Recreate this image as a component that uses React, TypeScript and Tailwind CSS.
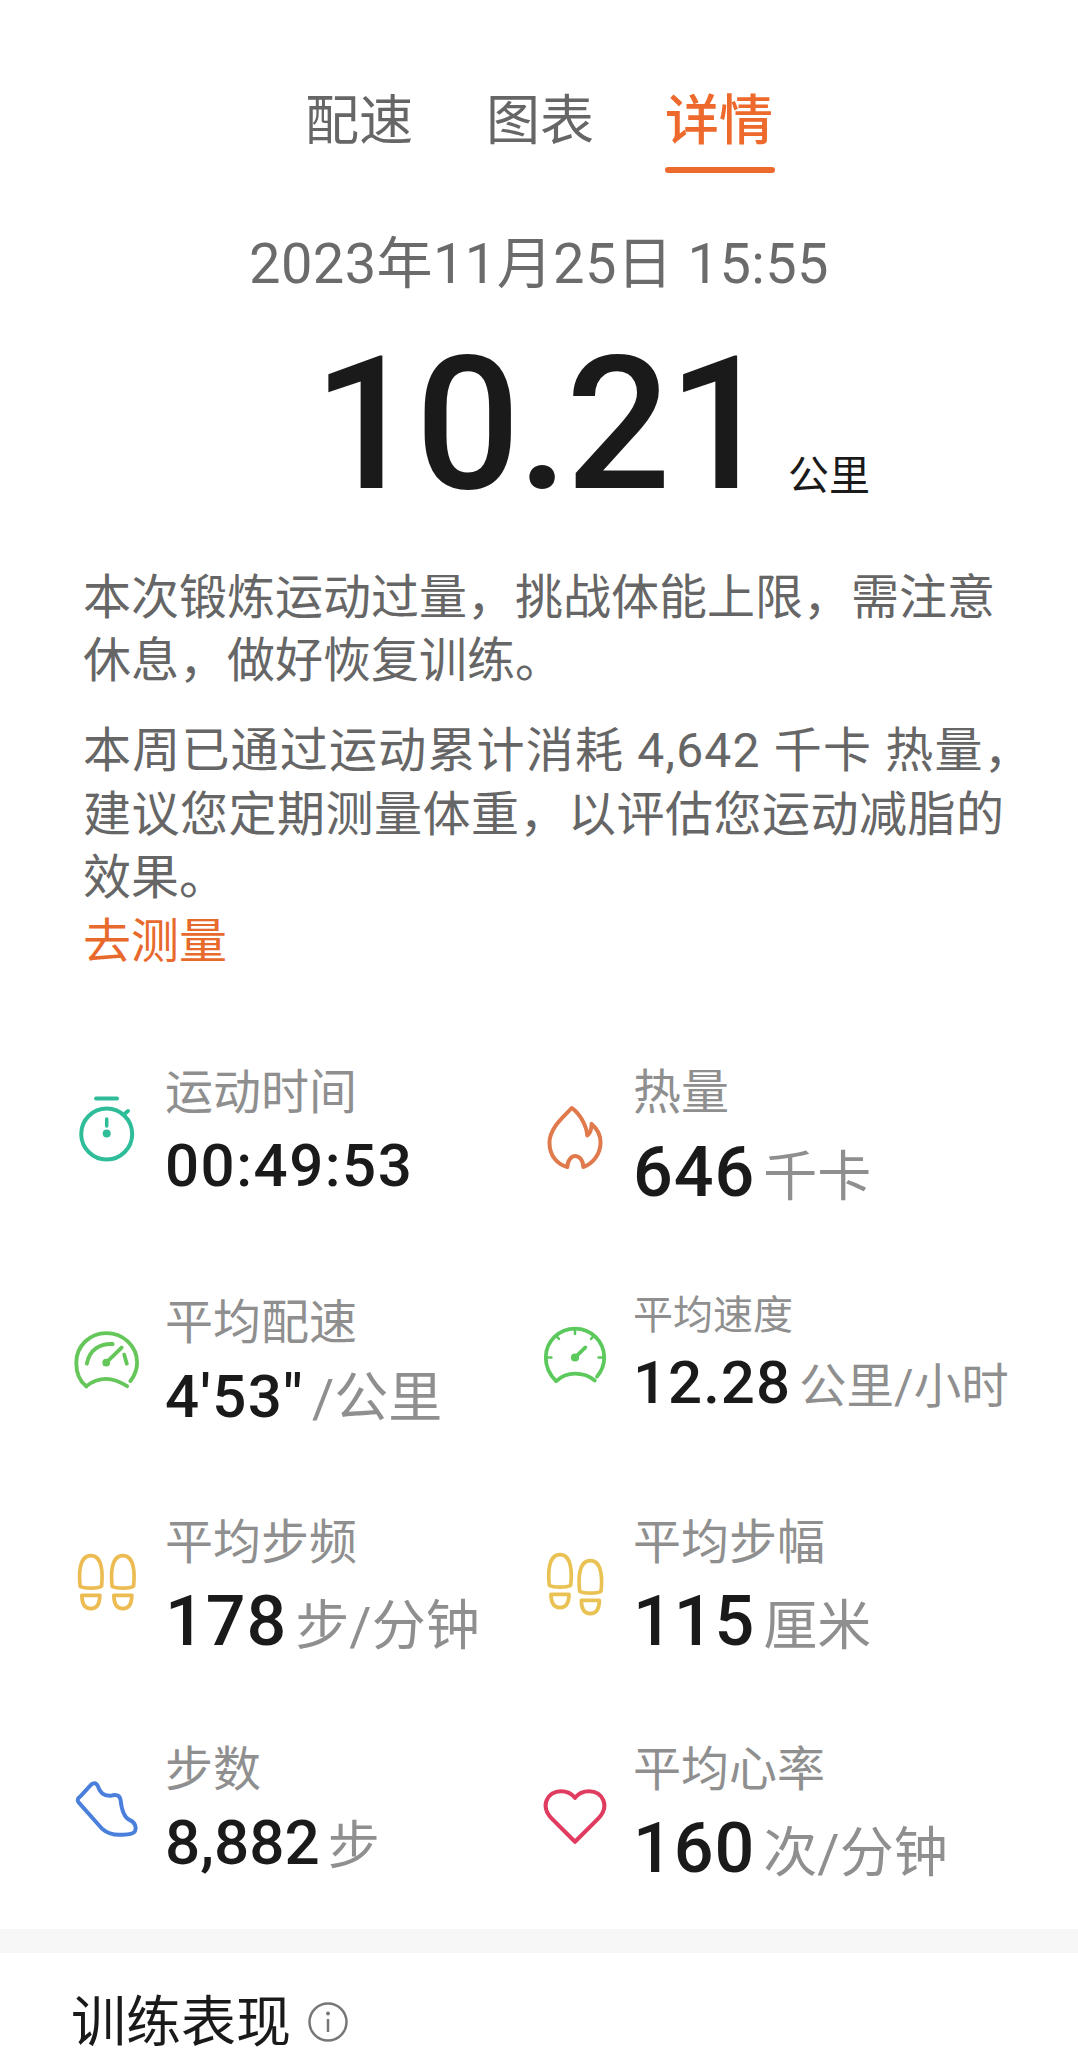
const cjk = "font-['Roboto','Noto_Sans_CJK_SC',sans-serif]";

const Stopwatch = () => (
  <svg viewBox="0 0 56 67" width={56} height={67} fill="none" stroke="#2fbd99" strokeWidth={4} strokeLinecap="round">
    <path d="M17 3.5H38" />
    <circle cx={27.7} cy={39} r={25.5} />
    <path d="M46 18.5L49 16" />
    <path d="M27.7 24V31" strokeWidth={3.5} />
    <circle cx={27.7} cy={38.5} r={4} fill="#2fbd99" stroke="none" />
  </svg>
);

const Flame = () => (
  <svg viewBox="45 185 180 205" width={60} height={68} fill="none" stroke="#e07a4c" strokeWidth={12} strokeLinejoin="round">
    <path d="M125 197C100 225 60 255 58 300C58 345 85 368 112 375C112 355 125 342 135 342C148 342 160 355 160 375C190 365 212 335 212 300C212 275 200 258 185 245C185 262 178 275 172 280C170 250 150 215 125 197Z" />
  </svg>
);

const GaugeOne = () => (
  <svg viewBox="70 860 205 190" width={68} height={63} fill="none" stroke="#65c65a" strokeWidth={12} strokeLinecap="round">
    <path d="M108 1038C85 1020 77 990 77 965C77 912 120 873 170 873C225 873 266 915 266 965C266 985 258 1005 245 1022" />
    <path d="M108 1038C130 1020 150 1015 170 1015C195 1015 215 1025 235 1038" />
    <path d="M110 968C118 925 150 905 190 907" />
    <path d="M226 940L234 968" />
    <path d="M170 965L218 918" />
    <circle cx={170} cy={965} r={12} fill="#65c65a" stroke="none" />
  </svg>
);

const GaugeTwo = () => (
  <svg viewBox="30 840 210 195" width={72} height={67} fill="none" stroke="#5cc95c" strokeWidth={12} strokeLinecap="round">
    <path d="M75 1022C52 1000 42 975 42 947C42 895 85 855 135 855C185 855 228 895 228 947C228 970 220 990 205 1008" />
    <path d="M75 1022C95 1003 115 998 135 998C160 998 180 1005 198 1020" />
    <path d="M135 858V872M75 878L84 888M195 878L186 888M45 947H60M225 947H210" strokeWidth={8} />
    <path d="M135 947L168 915" />
    <circle cx={135} cy={947} r={13} fill="#5cc95c" stroke="none" />
  </svg>
);

const Foot = ({ x, y }: { x: number; y: number }) => (
  <g transform={`translate(${x} ${y})`}>
    <path d="M-32 95C-36 60 -36 3 0 3C36 3 36 60 32 95C18 102 -18 102 -32 95Z" />
    <path d="M-27 122L27 122C27 148 20 162 0 162C-20 162 -27 148 -27 122Z" />
  </g>
);

const FeetEven = () => (
  <svg viewBox="80 160 185 180" width={62} height={60} fill="none" stroke="#ecbc52" strokeWidth={11} strokeLinejoin="round">
    <Foot x={124} y={168} />
    <Foot x={220} y={168} />
  </svg>
);

const FeetOffset = () => (
  <svg viewBox="45 155 180 195" width={60} height={65} fill="none" stroke="#e9c253" strokeWidth={11} strokeLinejoin="round">
    <Foot x={90} y={160} />
    <Foot x={181} y={178} />
  </svg>
);

const Shoe = () => (
  <svg viewBox="70 835 200 180" width={67} height={60} fill="none" stroke="#4a80dc" strokeWidth={12} strokeLinejoin="round">
    <path d="M84 905C78 897 82 892 90 886L122 851C130 844 138 846 142 855C148 875 160 886 180 885C198 880 208 882 211 897C214 925 220 950 238 958C255 965 260 980 255 992C250 1002 235 1002 215 1003C190 1005 170 998 155 985Z" />
  </svg>
);

const Heart = () => (
  <svg viewBox="30 855 210 185" width={72} height={63} fill="none" stroke="#e03c60" strokeWidth={13} strokeLinejoin="round">
    <path d="M135 1028L62 955C22 915 47 867 90 867C110 867 125 875 135 888C145 875 160 867 180 867C223 867 248 915 208 955Z" />
  </svg>
);

type Stat = {
  label: string;
  value: string;
  unit?: string;
  icon: React.ReactNode;
  iconClass: string;
  labelClass: string;
  valueClass: string;
  unitClass: string;
};

const stats: Stat[] = [
  { label: "运动时间", value: "00:49:53", icon: <Stopwatch />, iconClass: "mt-[30px]", labelClass: "text-[48px]", valueClass: "mt-[10px] text-[60px] tracking-[1.5px]", unitClass: "" },
  { label: "热量", value: "646", unit: "千卡", icon: <Flame />, iconClass: "mt-[39px]", labelClass: "text-[48px]", valueClass: "mt-[16px] text-[70px] tracking-[1px]", unitClass: "text-[54px]" },
  { label: "平均配速", value: "4'53\"", unit: "/公里", icon: <GaugeOne />, iconClass: "mt-[33px]", labelClass: "text-[48px]", valueClass: "mt-[11px] text-[60px] tracking-[1.5px]", unitClass: "text-[54px]" },
  { label: "平均速度", value: "12.28", unit: "公里/小时", icon: <GaugeTwo />, iconClass: "mt-[26px]", labelClass: "text-[40px] -mt-[7px]", valueClass: "mt-[4px] text-[60px] tracking-[1px]", unitClass: "text-[47.5px]" },
  { label: "平均步频", value: "178", unit: "步/分钟", icon: <FeetEven />, iconClass: "mt-[37px]", labelClass: "text-[48px]", valueClass: "mt-[15px] text-[70px] tracking-[1px]", unitClass: "text-[54px]" },
  { label: "平均步幅", value: "115", unit: "厘米", icon: <FeetOffset />, iconClass: "mt-[37px]", labelClass: "text-[48px]", valueClass: "mt-[15px] text-[70px] tracking-[1px]", unitClass: "text-[54px]" },
  { label: "步数", value: "8,882", unit: "步", icon: <Shoe />, iconClass: "mt-[37px]", labelClass: "text-[48px]", valueClass: "mt-[10px] text-[62px]", unitClass: "text-[52px]" },
  { label: "平均心率", value: "160", unit: "次/分钟", icon: <Heart />, iconClass: "mt-[43px]", labelClass: "text-[48px]", valueClass: "mt-[15px] text-[70px] tracking-[1px]", unitClass: "text-[54px]" },
];

const StatCell = ({ stat }: { stat: Stat }) => (
  <div className="flex items-start gap-[25px]">
    <div className={`flex w-[66px] shrink-0 justify-center ${stat.iconClass}`}>{stat.icon}</div>
    <div>
      <div className={`leading-[56px] text-[#8f8f8f] ${stat.labelClass}`}>{stat.label}</div>
      <div className={`flex items-baseline whitespace-nowrap leading-[70px] ${stat.valueClass}`}>
        <span className="font-medium text-[#1a1a1a]">{stat.value}</span>
        {stat.unit && <span className={`ml-[8px] tracking-normal text-[#8f8f8f] ${stat.unitClass}`}>{stat.unit}</span>}
      </div>
    </div>
  </div>
);

export default function App() {
  return (
    <div className={`h-[2070px] w-[1078px] overflow-hidden bg-white pt-[87px] ${cjk}`}>
      <div className="flex justify-center gap-[73px] pl-[2px] text-[54px] leading-[70px]">
        <div className="text-[#666666]">配速</div>
        <div className="text-[#666666]">图表</div>
        <div className="-ml-[2px] font-medium text-[#ee6a2c]">
          详情
          <div className="mt-[10px] h-[6px] w-[110px] rounded-full bg-[#ee6a2c]" />
        </div>
      </div>

      <div className="mt-[61px] text-center text-[56px] leading-[60px] tracking-[0.4px] text-[#6b6b6b]">2023年11月25日 15:55</div>

      <div className="mt-[66px] flex items-baseline pl-[313px] leading-[130px] text-[#1a1a1a]">
        <span className="text-[185px] font-medium tracking-[-3px]">10.21</span>
        <span className="ml-[18px] translate-y-[2px] text-[41px] leading-none">公里</span>
      </div>

      <div className="mt-[71px] pl-[83px] text-[48px] text-[#666666]">
        <p className="whitespace-nowrap leading-[63px]">
          本次锻炼运动过量，挑战体能上限，需注意
          <br />
          休息，做好恢复训练。
        </p>
        <p className="mt-[27px] whitespace-nowrap leading-[63.5px]">
          <span className="tracking-[1.2px]">本周已通过运动累计消耗 4,642 千卡 热量，</span>
          <br />
          <span className="tracking-[0.5px]">建议您定期测量体重，以评估您运动减脂的</span>
          <br />
          效果。
          <br />
          <span className="text-[#e8692c]">去测量</span>
        </p>
      </div>

      <div className="mt-[92px] grid grid-cols-[468px_1fr] grid-rows-[230px_220px_227px_187px] pl-[74px]">
        {stats.map((stat) => (
          <StatCell key={stat.label} stat={stat} />
        ))}
      </div>

      <div className="h-[24px] bg-[#f7f7f7]" />

      <div className="mt-[34px] flex items-center pl-[71px]">
        <span className="text-[55px] leading-[70px] text-[#1a1a1a]">训练表现</span>
        <svg viewBox="0 0 40 40" width={40} height={40} fill="none" stroke="#777777" className="ml-[17px]">
          <circle cx={20} cy={20} r={18.5} strokeWidth={2.5} />
          <path d="M20 17V30" strokeWidth={2.5} />
          <circle cx={20} cy={11.5} r={2} fill="#777777" stroke="none" />
        </svg>
      </div>
    </div>
  );
}
